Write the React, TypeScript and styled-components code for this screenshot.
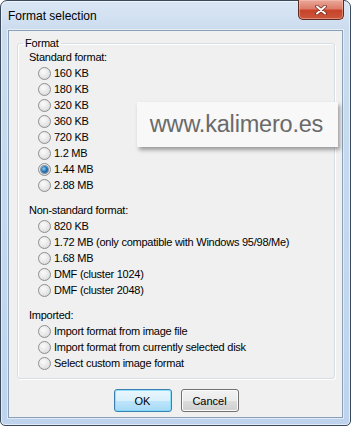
import React from "react";
import styled, { createGlobalStyle } from "styled-components";

const GlobalStyle = createGlobalStyle`
  html, body {
    margin: 0;
    padding: 0;
    background: #ffffff;
  }
  * {
    box-sizing: border-box;
  }
`;

type Option = {
  label: string;
  checked?: boolean;
};

type Section = {
  title: string;
  options: Option[];
};

const sections: Section[] = [
  {
    title: "Standard format:",
    options: [
      { label: "160 KB" },
      { label: "180 KB" },
      { label: "320 KB" },
      { label: "360 KB" },
      { label: "720 KB" },
      { label: "1.2 MB" },
      { label: "1.44 MB", checked: true },
      { label: "2.88 MB" },
    ],
  },
  {
    title: "Non-standard format:",
    options: [
      { label: "820 KB" },
      { label: "1.72 MB (only compatible with Windows 95/98/Me)" },
      { label: "1.68 MB" },
      { label: "DMF (cluster 1024)" },
      { label: "DMF (cluster 2048)" },
    ],
  },
  {
    title: "Imported:",
    options: [
      { label: "Import format from image file" },
      { label: "Import format from currently selected disk" },
      { label: "Select custom image format" },
    ],
  },
];

function CloseGlyph() {
  return (
    <svg width="12" height="10" viewBox="0 0 12 10">
      <path
        d="M2 1.5 L10 8.5 M10 1.5 L2 8.5"
        stroke="#7a2a1c"
        strokeWidth="3.6"
        strokeLinecap="round"
        fill="none"
      />
      <path
        d="M2 1.5 L10 8.5 M10 1.5 L2 8.5"
        stroke="#ffffff"
        strokeWidth="2"
        strokeLinecap="round"
        fill="none"
      />
    </svg>
  );
}

function App() {
  return (
    <>
      <GlobalStyle />
      <Window>
        <TitleBar>
          <Title>Format selection</Title>
          <CloseButton>
            <CloseGlyph />
          </CloseButton>
        </TitleBar>
        <Client>
          <GroupBox>
            <Legend>Format</Legend>
            {sections.map((section, i) => (
              <SectionBlock key={section.title} $first={i === 0}>
                <SectionLabel>{section.title}</SectionLabel>
                {section.options.map((opt) => (
                  <RadioRow key={opt.label}>
                    <RadioCircle $checked={!!opt.checked} />
                    <RadioText>{opt.label}</RadioText>
                  </RadioRow>
                ))}
              </SectionBlock>
            ))}
          </GroupBox>
          <ButtonRow>
            <Button $default>OK</Button>
            <Button>Cancel</Button>
          </ButtonRow>
        </Client>
        <Watermark>www.kalimero.es</Watermark>
      </Window>
    </>
  );
}

const Window = styled.div`
  position: relative;
  width: 351px;
  height: 426px;
  display: flex;
  flex-direction: column;
  padding: 0 7px 7px 7px;
  border: 1px solid #3a4a5c;
  border-radius: 7px 7px 5px 5px;
  background: linear-gradient(
    180deg,
    #dae6f4 0px,
    #cbdcef 30px,
    #bfd4ec 100%
  );
  box-shadow: inset 0 0 0 1px rgba(255, 255, 255, 0.55);
  font-family: "Liberation Sans", Arial, sans-serif;
  color: #000000;
`;

const TitleBar = styled.div`
  height: 29px;
  display: flex;
  align-items: flex-start;
  flex-shrink: 0;
`;

const Title = styled.div`
  font-size: 12px;
  line-height: 12px;
  margin-top: 9px;
  color: #000000;
`;

const CloseButton = styled.div`
  margin-left: auto;
  margin-right: -1px;
  margin-top: -1px;
  width: 46px;
  height: 20px;
  display: flex;
  align-items: center;
  justify-content: center;
  border: 1px solid #5e2a22;
  border-top: none;
  border-radius: 0 0 5px 5px;
  background: linear-gradient(
    180deg,
    #e9a99a 0%,
    #dc7d69 45%,
    #c7432a 55%,
    #c9573c 100%
  );
  box-shadow: inset 0 0 0 1px rgba(255, 200, 190, 0.45);
`;

const Client = styled.div`
  flex: 1;
  display: flex;
  flex-direction: column;
  background: #f0f0f0;
  border: 1px solid #8a9fb8;
  box-shadow: 0 0 0 1px rgba(255, 255, 255, 0.5);
  padding: 0 7px 5px 8px;
`;

const GroupBox = styled.fieldset`
  margin: 5px 0 0 0;
  padding: 0 8px 7px 5px;
  border: 1px solid #d5dfe5;
  border-radius: 3px;
  box-shadow: inset 1px 1px 0 #ffffff, 1px 1px 0 #ffffff;
  min-width: 0;
`;

const Legend = styled.legend`
  padding: 0 2px;
  font-size: 11px;
  line-height: 14px;
  letter-spacing: -0.2px;
`;

const SectionBlock = styled.div<{ $first: boolean }>`
  display: flex;
  flex-direction: column;
  padding-left: 6px;
  margin-top: ${(p) => (p.$first ? "0" : "10px")};
`;

const SectionLabel = styled.div`
  height: 15px;
  font-size: 11px;
  line-height: 15px;
  letter-spacing: -0.25px;
`;

const RadioRow = styled.div`
  height: 16px;
  display: flex;
  align-items: center;
  padding-left: 9px;
`;

const RadioCircle = styled.span<{ $checked: boolean }>`
  position: relative;
  width: 13px;
  height: 13px;
  border-radius: 50%;
  border: 1px solid #8e8f8f;
  background: radial-gradient(
    circle at 40% 35%,
    #fbfbfb 0%,
    #e6e6e6 55%,
    #cfcfcf 100%
  );
  flex-shrink: 0;
  margin-right: 3px;

  &::after {
    content: "";
    display: ${(p) => (p.$checked ? "block" : "none")};
    position: absolute;
    left: 2px;
    top: 2px;
    width: 7px;
    height: 7px;
    border-radius: 50%;
    background: radial-gradient(
      circle at 40% 40%,
      #8fd0f5 0%,
      #2a78b8 45%,
      #123e6e 100%
    );
    box-shadow: 0 0 0 1px rgba(20, 60, 110, 0.5);
  }
`;

const RadioText = styled.span`
  font-size: 11px;
  line-height: 16px;
  letter-spacing: -0.25px;
  white-space: nowrap;
`;

const ButtonRow = styled.div`
  display: flex;
  justify-content: center;
  gap: 9px;
  margin-top: 10px;
`;

const Button = styled.div<{ $default?: boolean }>`
  width: 58px;
  height: 23px;
  display: flex;
  align-items: center;
  justify-content: center;
  font-size: 11px;
  border-radius: 3px;
  border: 1px solid ${(p) => (p.$default ? "#3c7fb1" : "#707070")};
  background: ${(p) =>
    p.$default
      ? "linear-gradient(180deg, #eaf6fd 0%, #d9f0fc 50%, #bee6fd 51%, #a7d9f5 100%)"
      : "linear-gradient(180deg, #f2f2f2 0%, #ebebeb 50%, #dddddd 51%, #cfcfcf 100%)"};
  box-shadow: inset 0 0 0 1px
    ${(p) => (p.$default ? "rgba(120, 220, 250, 0.8)" : "#fcfcfc")};
`;

const Watermark = styled.div`
  position: absolute;
  left: 136px;
  top: 101px;
  width: 201px;
  height: 45px;
  display: flex;
  align-items: center;
  justify-content: center;
  padding-right: 2px;
  background: #f8f8f8;
  box-shadow: 2px 3px 4px rgba(0, 0, 0, 0.35);
  font-size: 23.5px;
  color: #6a6a6a;
  letter-spacing: -0.2px;
`;

export default App;
